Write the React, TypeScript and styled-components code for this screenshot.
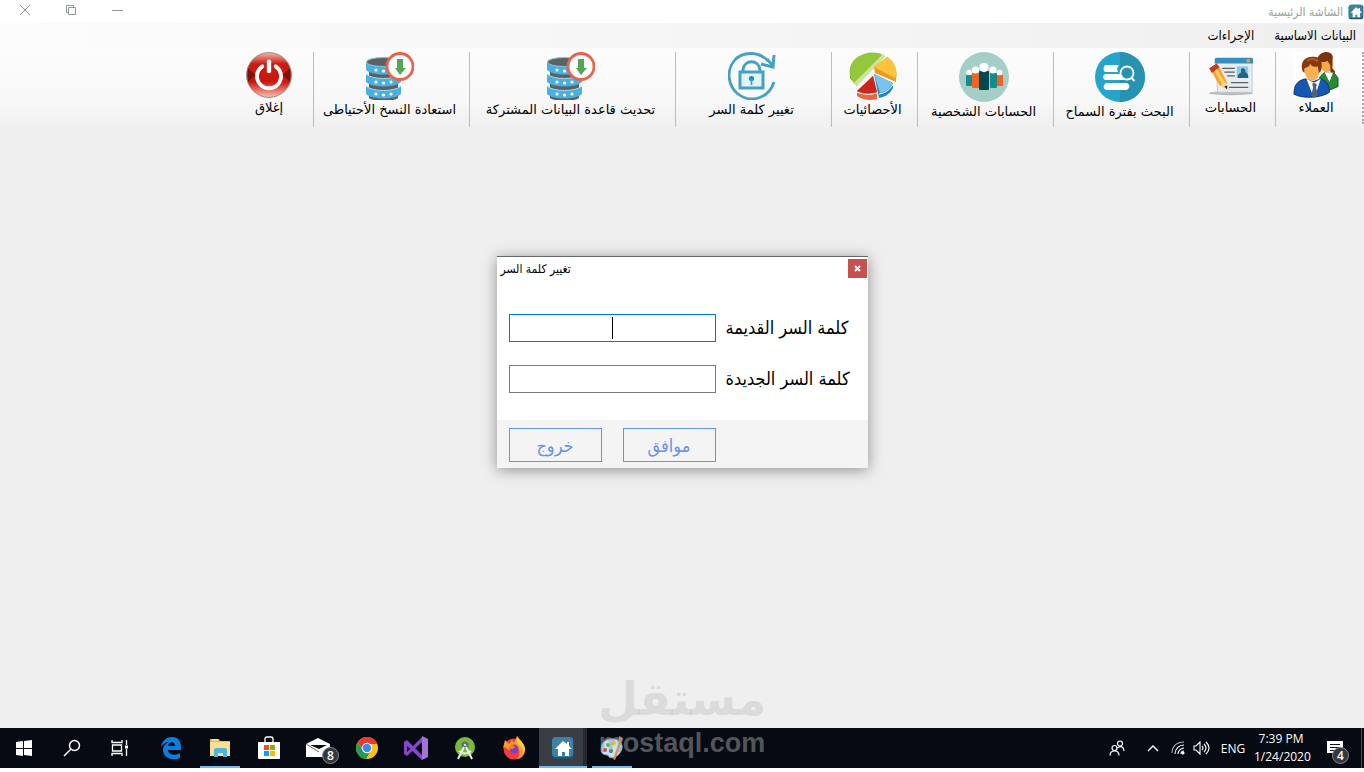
import React from "react";
import styled, { createGlobalStyle } from "styled-components";

const arabic = `"DejaVu Sans Condensed", "DejaVu Sans", sans-serif`;
const arabicWide = `"DejaVu Sans", sans-serif`;
const system = `"Open Sans", "Noto Sans", sans-serif`;

const GlobalStyle = createGlobalStyle`
  * { box-sizing: border-box; }
  html { background: #fff; }
  body { margin: 0; font-family: ${arabic}; color: #000; }
  button, input { font-family: inherit; margin: 0; }
  svg { display: block; flex: none; }
`;

const Screen = styled.div`
  display: flex;
  flex-direction: column;
  min-height: calc(100vh - 4px);
  margin-bottom: 4px;
  background: #efefef;
  position: relative;
  overflow: hidden;
`;

const PlainButton = styled.button`
  display: flex;
  align-items: center;
  justify-content: center;
  padding: 0;
  border: 0;
  background: none;
  color: inherit;
`;

const TitleBar = styled.header`
  display: flex;
  justify-content: space-between;
  height: 23px;
  background: #fff;
`;

const WindowTitle = styled.h1`
  display: flex;
  align-items: center;
  gap: 5px;
  margin: 0;
  font-size: 12px;
  line-height: 22px;
  font-weight: 400;
  color: #93a59b;
`;

const WindowButtons = styled.div`
  display: flex;
  padding-left: 2px;
`;

const WindowButton = styled(PlainButton)`
  width: 46px;
  height: 20px;
`;

const MenuBar = styled.nav`
  display: flex;
  gap: 20px;
  height: 25px;
  padding: 0 8px;
  background: linear-gradient(to left, #efefef, #fcfcfc);
`;

const MenuLink = styled.a`
  font-size: 13px;
  line-height: 25px;
  color: #000;
  text-decoration: none;
  white-space: nowrap;
`;

const ToolBar = styled.div`
  display: flex;
  height: 82px;
  padding-top: 4px;
  background: linear-gradient(#fcfcfc, #f8f8f8 65%, #efefef);
`;

const Grip = styled.span`
  width: 4px;
  height: 72px;
  border-right: 2px dotted #a8a8a8;
`;

const Tool = styled(PlainButton)<{ $width: number }>`
  flex-direction: column;
  justify-content: flex-start;
  width: ${(p) => p.$width}px;
  height: 75px;
  padding-right: 4px;
  border-left: 1px solid #bdbdbd;
  &:last-child { border-left: 0; }
`;

const ToolLabel = styled.span`
  font-family: ${arabicWide};
  font-size: 13px;
  line-height: 20px;
  white-space: nowrap;
`;

const Workspace = styled.main`
  flex: 1;
  padding-top: 126px;
`;

const Dialog = styled.section`
  width: 371px;
  margin: 0 auto;
  background: #fff;
  border-top: 1px solid #63686d;
  box-shadow: 0 2px 14px rgba(0, 0, 0, 0.4);
`;

const DialogHeader = styled.div`
  display: flex;
  justify-content: space-between;
  padding: 2px 1px 0 4px;
`;

const DialogTitle = styled.h2`
  margin: 0;
  font-size: 12px;
  line-height: 20px;
  font-weight: 400;
`;

const CloseButton = styled(PlainButton)`
  width: 19px;
  height: 19px;
  background: #c75050;
  color: #fff;
`;

const Form = styled.form`
  display: flex;
  flex-direction: column;
`;

const Fields = styled.div`
  display: flex;
  flex-direction: column;
  gap: 23px;
  padding: 35px 12px 27px;
`;

const Field = styled.div`
  display: flex;
  align-items: center;
  gap: 10px;
`;

const InputFrame = styled.span`
  position: relative;
  display: flex;
`;

const TextInput = styled.input`
  width: 207px;
  height: 28px;
  padding: 0 6px;
  border: 1px solid #7a7a7a;
  border-radius: 0;
  background: #fff;
  font-size: 16px;
  text-align: center;
  caret-color: transparent;
  outline: 0;
  &:focus { border-color: #0078d7; }
`;

const Caret = styled.span`
  position: absolute;
  top: 3px;
  left: 50%;
  width: 1px;
  height: 22px;
  background: #000;
  pointer-events: none;
`;

const FieldLabel = styled.label`
  font-size: 18px;
  line-height: 28px;
  white-space: nowrap;
`;

const DialogFooter = styled.div`
  display: flex;
  gap: 21px;
  padding: 8px 12px 6px;
  background: #f4f4f4;
`;

const DialogButton = styled(PlainButton)`
  width: 93px;
  height: 34px;
  border: 1px solid #6495ed;
  color: #6495ed;
  font-size: 18px;
`;

const TaskBar = styled.footer`
  display: flex;
  justify-content: space-between;
  height: 40px;
  background: #050a13;
  color: #fff;
  font-family: ${system};
`;

const TaskGroup = styled.div`
  display: flex;
`;

const AppGroup = styled.div`
  display: flex;
  gap: 1px;
  margin-left: 3px;
`;

const TaskButton = styled(PlainButton)<{ $state?: "open" | "active" }>`
  position: relative;
  width: 48px;
  height: 40px;
  background: ${(p) => (p.$state === "active" ? "linear-gradient(to right, #3a3d44 44px, #24282f 44px)" : "none")};
  &::after {
    content: "";
    display: ${(p) => (p.$state ? "block" : "none")};
    position: absolute;
    bottom: 0;
    left: ${(p) => (p.$state === "active" ? 0 : 4)}px;
    right: ${(p) => (p.$state === "active" ? 0 : 4)}px;
    height: 2px;
    background: #76b9ed;
  }
`;

const Badge = styled.span<{ $inset: number }>`
  position: absolute;
  right: ${(p) => p.$inset}px;
  bottom: 4px;
  width: 17px;
  height: 17px;
  border: 1px solid #85888c;
  border-radius: 50%;
  background: #34383e;
  color: #fff;
  font-size: 12px;
  line-height: 15px;
  font-weight: 600;
  text-align: center;
`;

const Tray = styled.div`
  display: flex;
  align-items: center;
  font-size: 12px;
`;

const TrayButton = styled(PlainButton)<{ $width: number }>`
  position: relative;
  width: ${(p) => p.$width}px;
  height: 40px;
  font-size: 12px;
`;

const Clock = styled.time`
  width: 54px;
  line-height: 18px;
  text-align: center;
  white-space: nowrap;
`;

const ShowDesktop = styled(PlainButton)`
  width: 3px;
  height: 40px;
  border-left: 1px solid #4a4f56;
`;

const Watermark = styled.div`
  position: absolute;
  left: 50%;
  bottom: 8px;
  display: flex;
  flex-direction: column;
  align-items: center;
  transform: translateX(-50%);
  color: rgba(150, 150, 150, 0.24);
  pointer-events: none;
`;

const WatermarkName = styled.span`
  font-family: ${arabicWide};
  font-size: 46px;
  line-height: 54px;
  font-weight: 700;
`;

const WatermarkSite = styled.span`
  font-family: "Liberation Sans", sans-serif;
  font-size: 27px;
  line-height: 34px;
  font-weight: 700;
  color: rgba(160, 160, 160, 0.5);
`;

type IconProps = { size?: number };

const HomeIcon = ({ size = 16 }: IconProps) => (
  <svg width={size} height={size} viewBox="0 0 24 24">
    <rect x="1" y="1" width="22" height="22" rx="4" fill="#20566f" />
    <rect x="1" y="1" width="21" height="20" rx="4" fill="#3b82a3" />
    <path d="M12 5 4 13h3v7h4v-4h3v4h4v-7h3l-3-3V6h-2v2z" fill="#fff" />
  </svg>
);

const ClientsIcon = ({ size = 48 }: IconProps) => (
  <svg width={size} height={size} viewBox="0 0 48 48">
    <rect width="48" height="48" fill="#fff" />
    <path d="M28 26 33 21 43 22 47 27 47 36 40 39H28z" fill="#2a8a33" stroke="#14571f" />
    <path d="m33 21 5 10 4-10z" fill="#fff" />
    <ellipse cx="35" cy="12" rx="7" ry="9" fill="#f7a84a" />
    <path d="M25 9C26 2 31 0 35 0c5 0 8 4 6 9l0 7c0 3 3 2 3 6l-5-1 0-7-3-5c-3 2-6 2-11 0z" fill="#7b3412" />
    <path d="M1 44c0-9 3-14 12-16l8 3 8-3c7 2 9 7 9 14-8 6-28 7-37 2z" fill="#1557b5" stroke="#0b3473" />
    <path d="m14 28 7 18h2l6-18-7 4z" fill="#fff" />
    <path d="m20 33 2-1 3 2-1 3 2 8-4 3-3-3 2-8z" fill="#4e6178" />
    <ellipse cx="20" cy="19" rx="8" ry="11" fill="#fbb052" />
    <path d="M10 20C7 11 12 5 20 5c9-1 12 6 9 15l-2 2-1-7c-4 1-7 0-8-3-1 4-4 4-6 5v5z" fill="#87390f" />
    <path d="M15 9c4-3 9-2 11 1" stroke="#b4602a" strokeWidth="2" fill="none" />
  </svg>
);

const AccountsIcon = ({ size = 48 }: IconProps) => (
  <svg width={size} height={size} viewBox="0 0 48 48">
    <ellipse cx="24" cy="43" rx="23" ry="2" fill="#bbb" />
    <path d="M8 7h38v35H10z" fill="#e9ecef" stroke="#c3c8cc" />
    <path d="M7 8q0-2 2-2h36q2 0 2 2v4H7z" fill="#348ebf" />
    <circle cx="42" cy="9" r="2" fill="#f39b23" />
    <rect x="30" y="15" width="12" height="12" fill="#8bcbe2" />
    <path d="M31 27c0-4 2-5 4-6-3-5 5-6 4 0 2 1 3 2 3 6z" fill="#23638b" />
    <path d="M15 17h13M17 21h11M20 25h8M24 32h18M22 37h20" stroke="#566068" strokeWidth="1.3" />
    <path d="m3 19 8-5 9 18-1 6-7-3z" fill="#f5a72d" />
    <path d="m7 17 10 17" stroke="#ffd16b" strokeWidth="3" />
    <path d="m1 17 8-5 3 4-8 6z" fill="#c43b28" />
    <path d="m13 35 7 3-1-7z" fill="#f4d7b2" /><path d="m17 36 3 3v-4z" fill="#222" />
  </svg>
);

const SearchRecordsIcon = ({ size = 48 }: IconProps) => (
  <svg width={size} height={size} viewBox="0 0 50 50">
    <circle cx="25" cy="25" r="25" fill="#25a5cc" />
    <path d="M25 0a25 25 0 0 1 0 50z" fill="#2892b1" />
    <path d="M10 13h14q-3 3-1 7H10q-3-3 0-7zM10 22h15q2 4 6 6H10q-4-3 0-6zM11 31h21q5 3 0 7H11q-5-3 0-7z" fill="#fff" />
    <circle cx="32" cy="21" r="6.5" fill="#2892b1" stroke="#fff" strokeWidth="1.8" />
    <path d="m36.500 26 3 3" stroke="#fff" strokeWidth="2" />
  </svg>
);

const PeopleIcon = ({ size = 48 }: IconProps) => (
  <svg width={size} height={size} viewBox="0 0 50 50">
    <circle cx="25" cy="25" r="25" fill="#a5cec7" />
    <g fill="#f0641e"><rect x="38" y="23" width="6" height="11" rx="1" /><rect x="13" y="21" width="8" height="15" rx="1" /></g>
    <g fill="#168b8e"><rect x="7" y="23" width="6" height="11" rx="1" /><rect x="31" y="21" width="7" height="15" rx="1" /></g>
    <rect x="20" y="19" width="10" height="19" rx="1" fill="#064852" />
    <g fill="#fff">
      <circle cx="25" cy="15.500" r="4.700" /><circle cx="16.500" cy="18" r="3.600" /><circle cx="34" cy="18" r="3.600" />
      <circle cx="10" cy="20.500" r="2.800" /><circle cx="40.500" cy="20.500" r="2.800" />
    </g>
  </svg>
);

const StatsIcon = ({ size = 48 }: IconProps) => (
  <svg width={size} height={size} viewBox="0 0 48 48">
    <path d="M1 21v5l7 8 5-7z" fill="#578d20" />
    <path d="M7 33C-2 25-1 14 6 7 14 0 27-2 36 4z" fill="#93c83c" />
    <path d="m5 31 29-29 2 3L8 34z" fill="#cde49a" />
    <path d="M25 15 38 5c8 4 11 16 9 21v4L26 21z" fill="#e99c1e" />
    <path d="M25 15 38 5c8 4 11 15 8 21z" fill="#fbc43c" />
    <path d="m25 22 19 9v5c-3 6-8 9-14 10z" fill="#2385c4" />
    <path d="m25 22 19 9c-3 6-8 9-13 10z" fill="#7bc3ed" />
    <path d="M24 24 8 39v5c6 4 13 5 20 3v-6z" fill="#ea6841" />
    <path d="M24 24 8 39c7 3 13 3 20 1z" fill="#c9271b" />
    <path d="M8 40c7 3 13 3 20 1M44 32c-3 6-8 9-14 10" stroke="#fff" strokeWidth="1" fill="none" />
  </svg>
);

const LockIcon = ({ size = 48 }: IconProps) => (
  <svg width={size} height={size} viewBox="0 0 48 48" fill="none" stroke="#469fc4" strokeWidth="2.800">
    <path d="M40 9C31-1 14-1 6 9-2 19 0 34 10 42c13 10 31 4 36-12" />
    <path d="M33 12l12 3 1-12" strokeWidth="3" /><path d="m39 7 6 7" />
    <rect x="12" y="20" width="23" height="16" fill="#e1f4fa" strokeWidth="3" />
    <path d="M15 20v-2c1-11 16-11 17 0v2" strokeWidth="3" />
    <circle cx="23.500" cy="26.500" r="2.600" fill="#2c86ac" stroke="none" /><path d="M23.500 27v6" strokeWidth="1.800" />
  </svg>
);

const DatabaseIcon = ({ size = 48 }: IconProps) => (
  <svg width={size} height={size} viewBox="0 0 48 48">
    <path d="M3 14h29v28H3z" fill="#5d6163" />
    {[34, 22, 10].map((y) => (
      <g key={y}>
        <path d={`M3 ${y + 9}v3c5 4 24 4 29 0v-3z`} fill="#5d6163" />
        <path d={`M0 ${y}v8c6 6 29 6 35 0v-8c-6 6-29 6-35 0z`} fill="#4ab0df" />
        <path d={`M0 ${y}c6 6 29 6 35 0`} fill="none" stroke="#a8dbf0" />
        <g fill="#fff"><circle cx="10" cy={y + 8} r="1.600" /><circle cx="17.500" cy={y + 9} r="1.600" /><circle cx="25" cy={y + 8} r="1.600" /></g>
      </g>
    ))}
    <ellipse cx="17.500" cy="10" rx="17" ry="4.500" fill="#5d6163" stroke="#7fc6e4" />
    <circle cx="34" cy="14.500" r="13" fill="#fff" stroke="#e7634b" strokeWidth="2.800" />
    <path d="M31 7h6v9h3l-6 7-5-7h2z" fill="#53a653" />
  </svg>
);

const PowerIcon = ({ size = 48 }: IconProps) => (
  <svg width={size} height={size} viewBox="0 0 48 48">
    <defs>
      <linearGradient id="power" x1="0" y1="0" x2="0" y2="1">
        <stop offset="0" stopColor="#ffb5aa" /><stop offset=".25" stopColor="#c91e13" />
        <stop offset=".65" stopColor="#c9170e" /><stop offset="1" stopColor="#ffc1b4" />
      </linearGradient>
    </defs>
    <circle cx="24" cy="24" r="23.400" fill="url(#power)" stroke="#8a8a8a" />
    <path d="M2 17 10 24 2 31zM46 17l-8 7 8 7z" fill="#7b120c" />
    <path d="M17 15a12.500 12.500 0 1 0 14 0" fill="none" stroke="#fff" strokeWidth="4" strokeLinecap="round" />
    <path d="M24 10v10" stroke="#fff" strokeWidth="4.500" strokeLinecap="round" />
  </svg>
);

const tools = [
  { label: "العملاء", width: 85, icon: ClientsIcon, size: 46 },
  { label: "الحسابات", width: 86, icon: AccountsIcon, size: 46 },
  { label: "البحث بفترة السماح", width: 136, icon: SearchRecordsIcon, size: 50 },
  { label: "الحسابات الشخصية", width: 136, icon: PeopleIcon, size: 50 },
  { label: "الأحصائيات", width: 86, icon: StatsIcon, size: 48 },
  { label: "تغيير كلمة السر", width: 156, icon: LockIcon, size: 48 },
  { label: "تحديث قاعدة البيانات المشتركة", width: 206, icon: DatabaseIcon, size: 48 },
  { label: "استعادة النسخ الأحتياطى", width: 156, icon: DatabaseIcon, size: 48 },
  { label: "إغلاق", width: 84, icon: PowerIcon, size: 46 },
];

const Glyph = ({ size = 24, children }: { size?: number; children: React.ReactNode }) => (
  <svg width={size} height={size} viewBox="0 0 24 24">{children}</svg>
);

const systemButtons = [
  { name: "Start", art: <path d="m4 6 7-1v7H4zm8-1 8-1v8h-8zm-8 8h7v7l-7-1zm8 0h8v7l-8-1z" fill="#fff" /> },
  { name: "Search", art: <g fill="none" stroke="#fff" strokeWidth="1.500"><circle cx="14.500" cy="9.500" r="5" /><path d="m11 13-7 7" /></g> },
  {
    name: "Task View",
    art: <g fill="none" stroke="#fff" strokeWidth="1.300"><path d="M4 4v2.500h10V4M4 20v-2.500h10V20M4.500 9h9v6h-9zM18.500 4v5M18.500 13v7" /><path d="M17 11h3" strokeWidth="3" /></g>,
  },
];

const apps: { name: string; state?: "open" | "active"; badge?: string; art: React.ReactNode }[] = [
  {
    name: "Edge",
    art: <path d="M2 11C3 4 8 1 13 1c6 0 9 4 9 10v3H9c0 5 8 6 12 3v5c-6 3-17 1-17-8 0-4 3-7 6-8-3 0-6 2-8 5zm7-1h7c0-5-6-5-7 0z" fill="#0b7ddb" />,
  },
  {
    name: "File Explorer",
    state: "open",
    art: <><path d="M2 3h9l1 2h10v15H2z" fill="#e9b94b" /><path d="M2 6h20v14H2z" fill="#fbe08c" /><path d="M6 14q0-2 2-2h9q2 0 2 2v7h-4v-4h-5v4H6z" fill="#4bb5e6" /><path d="M4 4h6" stroke="#fff" /></>,
  },
  {
    name: "Store",
    art: <><path d="M8 6V3q0-2 2-2h4q2 0 2 2v3" fill="none" stroke="#fff" strokeWidth="1.300" /><path d="M1 6h22v16q0 1-1 1H2q-1 0-1-1z" fill="#fff" /><path fill="#f25022" d="M7 9h5v5H7z" /><path fill="#7fba00" d="M13 9h5v5h-5z" /><path fill="#00a4ef" d="M7 15h5v5H7z" /><path fill="#ffb900" d="M13 15h5v5h-5z" /></>,
  },
  {
    name: "Mail",
    badge: "8",
    art: <><path d="M0 8 12 2l12 6v13H0z" fill="#fff" /><path d="M4 9h17l-8 4z" fill="#050a13" /><path d="m0 8 13 8" fill="none" stroke="#050a13" strokeWidth=".6" /></>,
  },
  {
    name: "Chrome",
    art: <><circle cx="12" cy="12" r="11" fill="#fbc116" /><path d="M2.500 6.500a11 11 0 0 1 19 0L22 8H12l-4 6z" fill="#e33b2e" /><path d="M2.500 6.500A11 11 0 0 0 11 23l5-9-8 1z" fill="#229a58" /><circle cx="12" cy="12" r="5.200" fill="#fff" /><circle cx="12" cy="12" r="4.200" fill="#4285f4" /></>,
  },
  {
    name: "Visual Studio",
    art: <><path d="m18 0 6 3v18l-6 3z" fill="#a273d9" /><path d="M0 6 3 4l15 15v5L3 10v6l15-15v5L3 20l-3-2z" fill="#8547c9" /></>,
  },
  {
    name: "Android Studio",
    art: <><circle cx="12" cy="11" r="10" fill="#79b93c" /><circle cx="12" cy="9" r="3.500" fill="#5c6c70" /><circle cx="12" cy="9" r="1.300" fill="#c8dbc3" /><path d="M11 11 5 23M13 11l6 12M6 15q6 5 12 0" fill="none" stroke="#eef1f1" strokeWidth="2" /></>,
  },
  {
    name: "Firefox",
    art: <><circle cx="12" cy="13" r="10.500" fill="#f13c43" /><path d="M1 12 3 4l4 4 3-4 2 3 3-7c2 4 8 7 8 14 0 5-4 9-8 9 4-5 3-10-1-12L8 15l-5-4z" fill="#ff9b24" /><path d="M15 0c2 4 8 7 8 14l-2 4c1-6-3-8-6-11z" fill="#ffce3d" /><circle cx="12" cy="13" r="4.500" fill="#7645c7" /><path d="M6 12q4 3 7-1l-3-3z" fill="#f77a24" /></>,
  },
  { name: "Home", state: "active", art: <HomeIcon size={24} /> },
  {
    name: "Paint",
    state: "open",
    art: <><path d="M2 17C-1 8 5 2 13 3c8 0 11 7 8 12-3 6-9 8-12 6 0-3-4-1-7-4z" fill="#c5e4f3" stroke="#75afcf" /><circle cx="5" cy="14" r="2" fill="#e23c38" /><circle cx="8" cy="9" r="2" fill="#56b548" /><circle cx="14" cy="7" r="2.200" fill="#f3bd23" /><circle cx="11" cy="15" r="2" fill="#31617c" /><path d="m13 23 7-19 2 1-7 19z" fill="#ee8e24" /><path d="m19 4 0-4 4 2-1 4z" fill="#c48a6b" /></>,
  },
];

export default function App() {
  return (
    <>
      <GlobalStyle />
      <Screen>
        <TitleBar dir="rtl">
          <WindowTitle><HomeIcon size={16} />الشاشة الرئيسية</WindowTitle>
          <WindowButtons>
            <WindowButton aria-label="Minimize"><svg width="12" height="12"><path d="M1 6.500h11" stroke="#8b9894" /></svg></WindowButton>
            <WindowButton aria-label="Restore"><svg width="12" height="12" fill="none" stroke="#8b9894"><path d="M3.500 3.500h7v7h-7zM3.500 8.500h-2v-7h7v2" /></svg></WindowButton>
            <WindowButton aria-label="Close"><svg width="12" height="12"><path d="m1 1 10 10M11 1 1 11" stroke="#8b9894" /></svg></WindowButton>
          </WindowButtons>
        </TitleBar>
        <MenuBar dir="rtl">
          <MenuLink href="#data">البيانات الاساسية</MenuLink>
          <MenuLink href="#actions">الإجراءات</MenuLink>
        </MenuBar>
        <ToolBar dir="rtl">
          <Grip />
          {tools.map(({ label, width, icon: Icon, size }) => (
            <Tool key={label} $width={width}>
              <Icon size={size} />
              <ToolLabel>{label}</ToolLabel>
            </Tool>
          ))}
        </ToolBar>
        <Workspace>
          <Dialog role="dialog" aria-labelledby="dialog-title">
            <DialogHeader>
              <DialogTitle id="dialog-title">تغيير كلمة السر</DialogTitle>
              <CloseButton aria-label="Close"><svg width="7" height="7"><path d="m1 1 5 5M6 1 1 6" stroke="#fff" strokeWidth="1.800" /></svg></CloseButton>
            </DialogHeader>
            <Form onSubmit={(e) => e.preventDefault()}>
              <Fields>
                <Field>
                  <InputFrame>
                    <TextInput id="old-password" type="password" autoFocus />
                    <Caret />
                  </InputFrame>
                  <FieldLabel htmlFor="old-password">كلمة السر القديمة</FieldLabel>
                </Field>
                <Field>
                  <TextInput id="new-password" type="password" />
                  <FieldLabel htmlFor="new-password">كلمة السر الجديدة</FieldLabel>
                </Field>
              </Fields>
              <DialogFooter>
                <DialogButton type="button">خروج</DialogButton>
                <DialogButton type="submit">موافق</DialogButton>
              </DialogFooter>
            </Form>
          </Dialog>
        </Workspace>
        <TaskBar>
          <TaskGroup>
            {systemButtons.map(({ name, art }) => (
              <TaskButton key={name} aria-label={name}><Glyph>{art}</Glyph></TaskButton>
            ))}
            <AppGroup>
              {apps.map(({ name, state, badge, art }) => (
                <TaskButton key={name} aria-label={name} $state={state}>
                  <Glyph>{art}</Glyph>
                  {badge && <Badge $inset={3}>{badge}</Badge>}
                </TaskButton>
              ))}
            </AppGroup>
          </TaskGroup>
          <Tray>
            <TrayButton aria-label="People" $width={46}>
              <svg width="16" height="16" fill="none" stroke="#fff" strokeWidth="1.200"><circle cx="5.500" cy="8" r="2.500" /><path d="M1 15.500c0-6 9-6 9 0" /><circle cx="11" cy="3.500" r="2.500" /><path d="M8.500 8c3-3 6.500-1 6.500 3" /></svg>
            </TrayButton>
            <TrayButton aria-label="Show hidden icons" $width={26}>
              <svg width="12" height="8" fill="none" stroke="#fff" strokeWidth="1.400"><path d="m1 7 5-5 5 5" /></svg>
            </TrayButton>
            <TrayButton aria-label="Network" $width={24}>
              <svg width="14" height="14" fill="none" stroke="#fff" strokeWidth="1.100"><path d="M1 12C1 5 6 1 13 1" opacity=".7" /><path d="M4 13c0-5 4-9 9-9M7 13c0-3 3-6 6-6M10 13c0-2 1-3 3-3" /><circle cx="12" cy="12" r="1" fill="#fff" /></svg>
            </TrayButton>
            <TrayButton aria-label="Volume" $width={22}>
              <svg width="17" height="14" fill="none" stroke="#fff" strokeWidth="1.100"><path d="M1 5h2l4-4v12L3 9H1zM9 5q2 2 0 4M11 3q4 4 0 8M13 1q6 6 0 12" /></svg>
            </TrayButton>
            <TrayButton $width={42}>ENG</TrayButton>
            <Clock>7:39 PM<br />1/24/2020</Clock>
            <TrayButton aria-label="Notifications" $width={53}>
              <svg width="24" height="20"><path d="M4 3h16v12h-6l-3 3v-3H4z" fill="#fff" /><path d="M7 6.500h10M7 9.500h10M7 12.500h6" stroke="#050a13" /></svg>
              <Badge $inset={12}>4</Badge>
            </TrayButton>
            <ShowDesktop aria-label="Show desktop" />
          </Tray>
        </TaskBar>
        <Watermark>
          <WatermarkName dir="rtl">مستقل</WatermarkName>
          <WatermarkSite>mostaql.com</WatermarkSite>
        </Watermark>
      </Screen>
    </>
  );
}
